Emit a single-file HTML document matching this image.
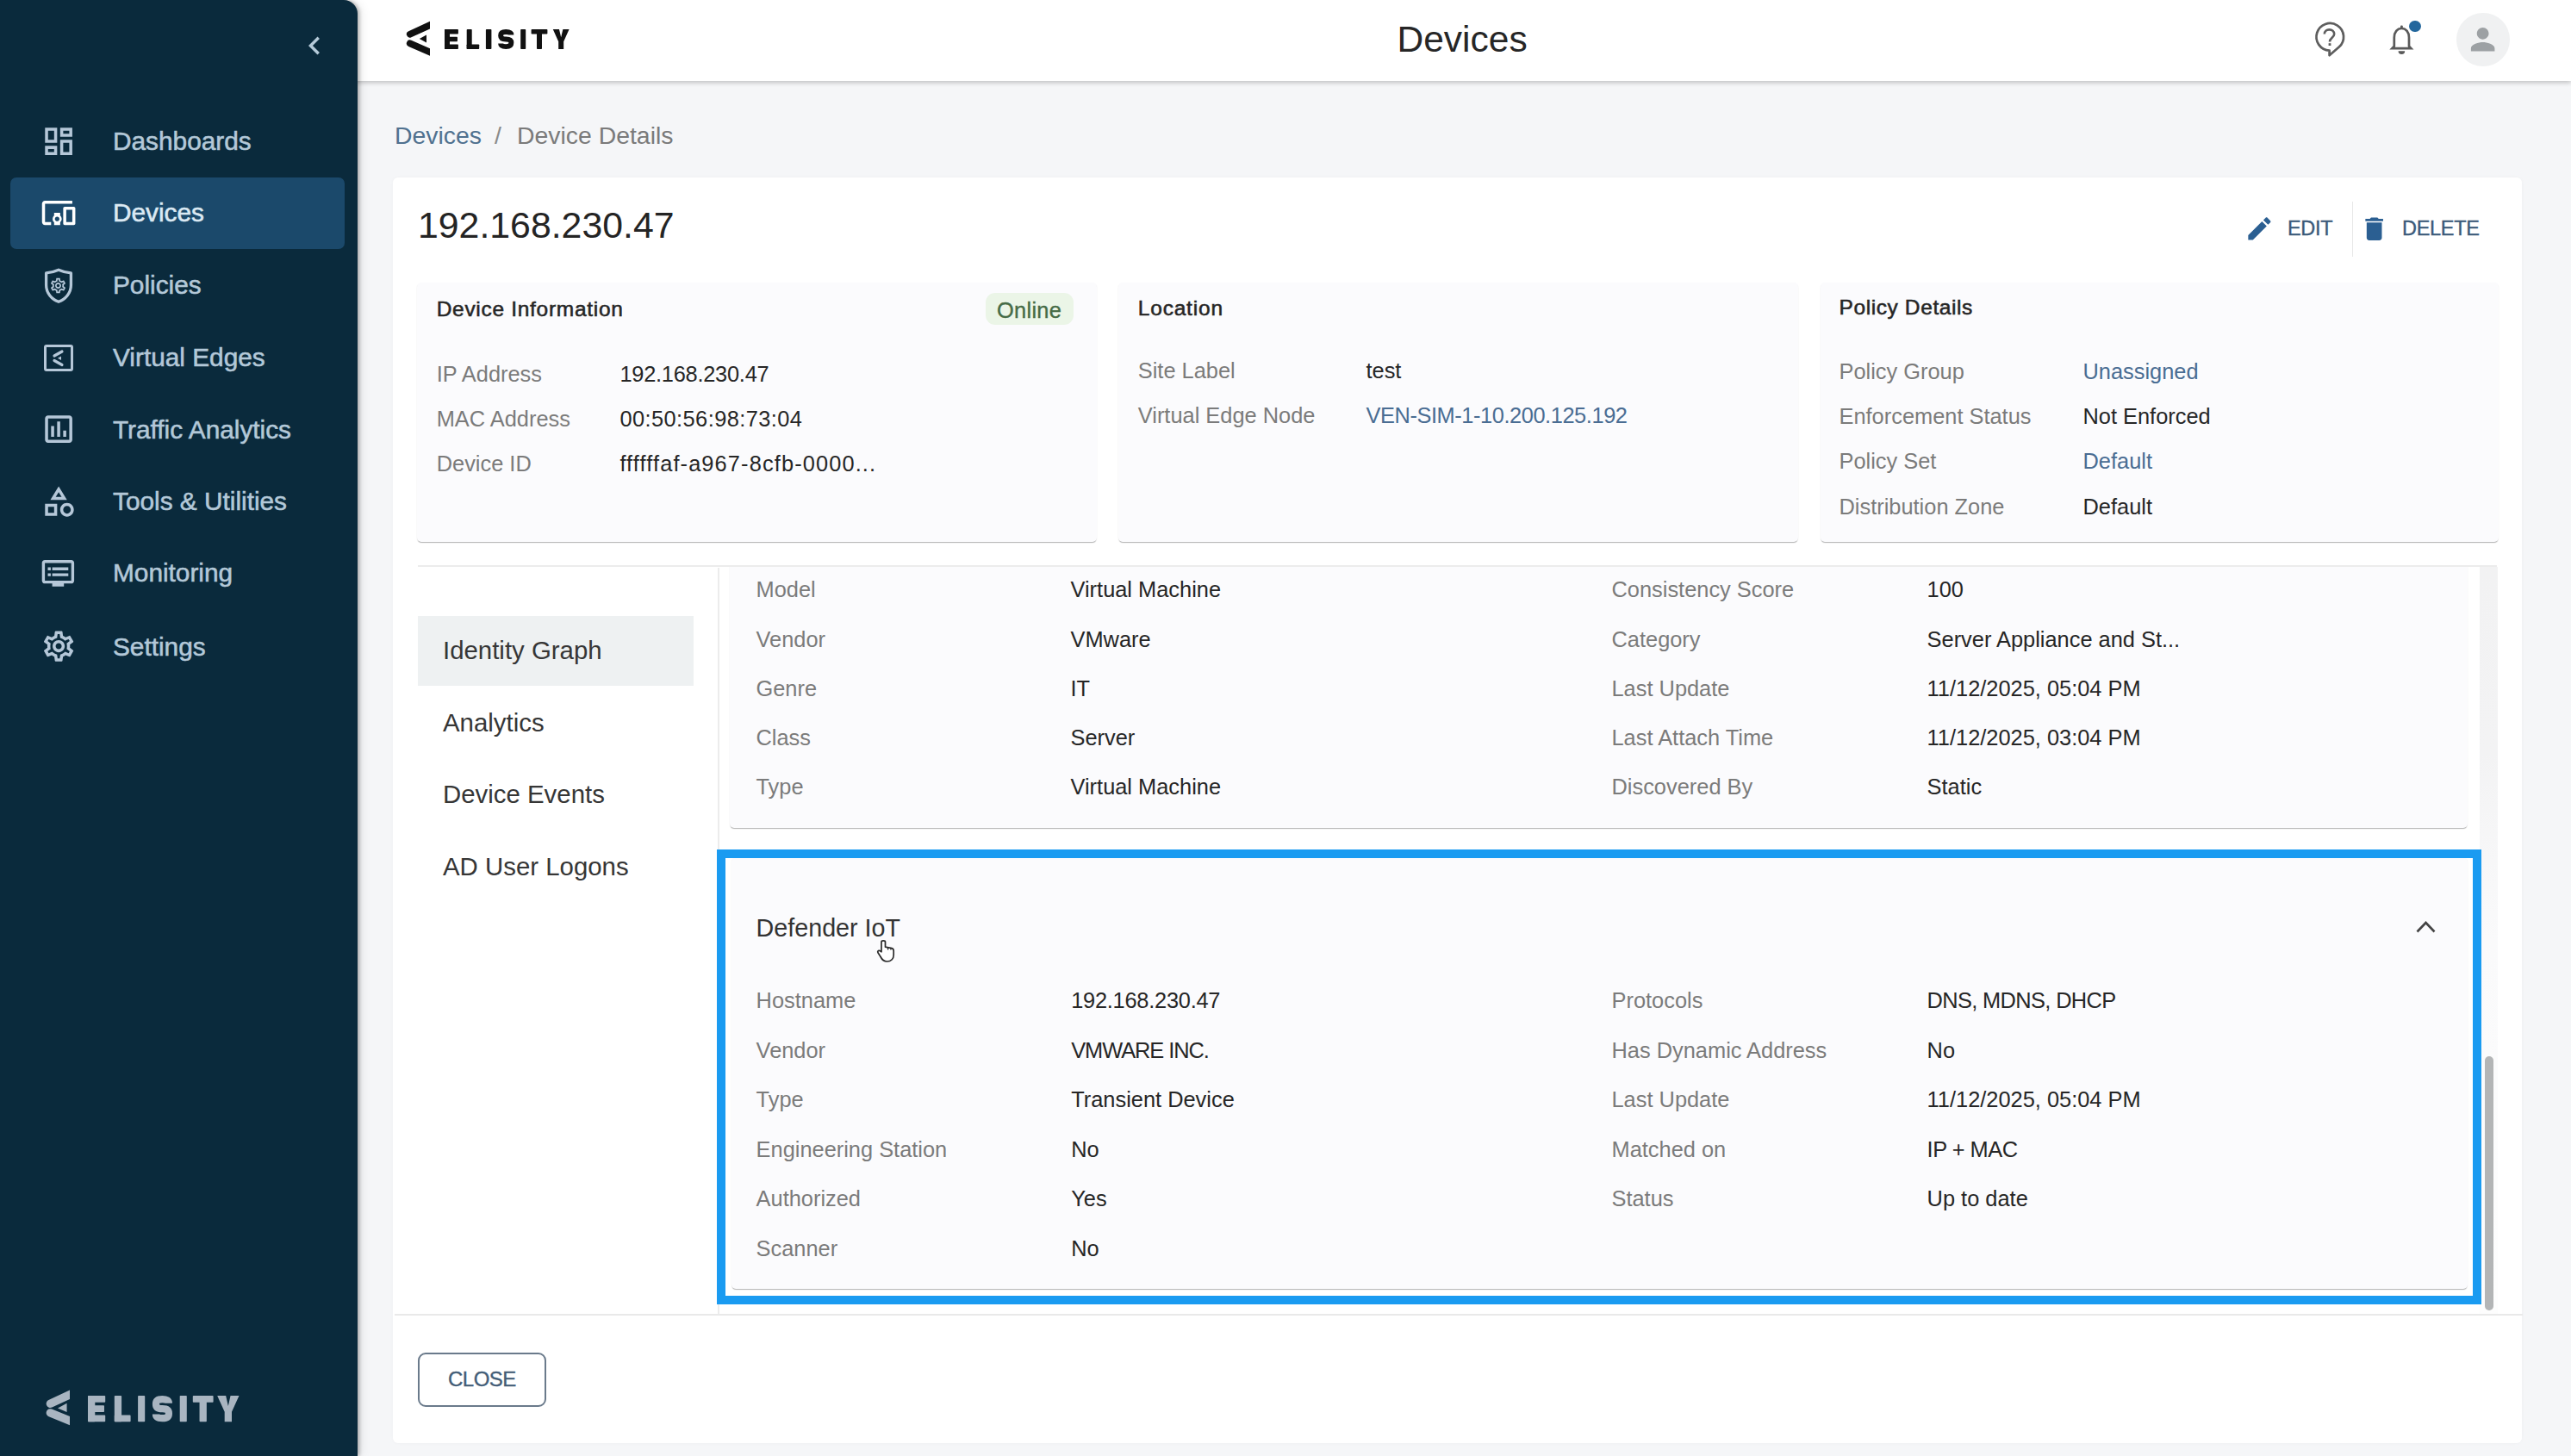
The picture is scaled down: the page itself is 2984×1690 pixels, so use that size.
<!DOCTYPE html>
<html><head><meta charset="utf-8"><title>Devices</title>
<style>
html,body{margin:0;padding:0;width:2984px;height:1690px;overflow:hidden;background:#f5f6f8;}
body{position:relative;font-family:"Liberation Sans",sans-serif;}
.a{position:absolute;}
.t{position:absolute;white-space:nowrap;line-height:1;}
.m{-webkit-text-stroke:0.35px currentColor;}
.mm{-webkit-text-stroke:0.55px currentColor;}
</style></head><body>
<div class="a" style="left:0.0px;top:0.0px;width:2984.0px;height:94.0px;background:#fff;box-shadow:0 2px 5px rgba(0,0,0,0.22);z-index:1"></div>
<div class="a" style="left:0;top:0;width:2984px;height:94px;z-index:2">
<svg class="a" style="left:467.70px;top:21.10px" width="31.70" height="47.70" viewBox="0 0 31.70 47.70"><g stroke="#111" stroke-width="7.8" stroke-linecap="round"><line x1="7.80" y1="18.70" x2="39.50" y2="4.24"/><line x1="7.80" y1="29.40" x2="39.50" y2="43.33"/></g><polygon fill="#111" points="18.80,23.90 27.00,19.60 27.00,28.60"/></svg>
<svg class="a" style="left:513.60px;top:31.80px" width="148.60" height="27.10" viewBox="0 0 148.60 27.10"><g fill="#111"><rect x="2.00" y="2.00" width="6.00" height="23.10" rx="0.8"/><rect x="2.00" y="2.00" width="15.90" height="5.58" rx="0.8"/><rect x="2.00" y="10.76" width="14.95" height="5.58" rx="0.8"/><rect x="2.00" y="19.52" width="15.90" height="5.58" rx="0.8"/><rect x="27.70" y="2.00" width="6.00" height="23.10" rx="0.8"/><rect x="27.70" y="19.52" width="14.50" height="5.58" rx="0.8"/><rect x="49.90" y="2.00" width="6.50" height="23.10" rx="0.8"/><rect x="90.20" y="2.00" width="6.00" height="23.10" rx="0.8"/><rect x="102.60" y="2.00" width="18.80" height="5.58" rx="0.8"/><rect x="109.00" y="2.00" width="6.00" height="23.10" rx="0.8"/><polygon points="127.80,2.00 135.00,2.00 137.20,11.24 139.40,2.00 146.60,2.00 140.20,16.32 140.20,25.10 134.20,25.10 134.20,16.32"/><path d="M79.40,8.59 Q79.40,5.00 73.25,5.00 Q67.10,5.00 67.10,9.27 Q67.10,13.55 73.25,13.55 Q79.40,13.55 79.40,17.83 Q79.40,22.10 73.25,22.10 Q67.10,22.10 67.10,18.51" fill="none" stroke="#111" stroke-width="5.88"/></g></svg>
<div class="t" style="left:1621.5px;top:24.5px;font-size:42.5px;color:#262626;">Devices</div>
<svg class="a" style="left:2680px;top:20px" width="48" height="50" viewBox="2680 20 48 50">
<path d="M2703.6 58.6 A15.8 15.8 0 1 1 2714.8 54.6 L2703.6 64.2 Z" fill="none" stroke="#5e5e5e" stroke-width="2.7" stroke-linejoin="round"/>
<path d="M2697.8 39.6 C2697.8 36.2 2700.4 34.4 2703.4 34.4 C2706.6 34.4 2709.2 36.4 2709.2 39.6 C2709.2 43.6 2704 44 2704 48.4" fill="none" stroke="#5e5e5e" stroke-width="2.6" stroke-linecap="butt"/>
<rect x="2702.6" y="50.2" width="2.8" height="2.8" fill="#5e5e5e"/>
</svg>
<svg class="a" style="left:2768px;top:22px" width="40" height="44" viewBox="2768 22 40 44">
<path d="M2776.4 56.2 L2778.8 53.6 V43.5 C2778.8 37.2 2782.4 33 2787.4 33 C2792.4 33 2796 37.2 2796 43.5 V53.6 L2798.4 56.2 Z" fill="none" stroke="#5a5a5a" stroke-width="2.7" stroke-linejoin="miter"/>
<rect x="2786" y="29.4" width="2.8" height="4.5" rx="1.2" fill="#5a5a5a"/>
<path d="M2783.6 59.2 H2791.2 A3.8 3.8 0 0 1 2783.6 59.2 Z" fill="#5a5a5a"/>
</svg>
<div class="a" style="left:2796.0px;top:23.7px;width:13.5px;height:13.5px;background:#23679d;border-radius:50%"></div>
<div class="a" style="left:2851.0px;top:15.0px;width:61.7px;height:61.7px;background:#f0f1f2;border-radius:50%"></div>
<svg class="a" style="left:2861.0px;top:24.7px;" width="41.3" height="41.3" viewBox="0 0 24 24"><path fill="#9da1a4" d="M12 12c2.21 0 4-1.79 4-4s-1.79-4-4-4-4 1.79-4 4 1.79 4 4 4zm0 2c-2.67 0-8 1.34-8 4v2h16v-2c0-2.66-5.33-4-8-4z"/></svg>
</div>
<div class="a" style="left:0.0px;top:0.0px;width:415.0px;height:1690.0px;background:#0a2a3c;border-top-right-radius:16px;box-shadow:2px 0 4px rgba(0,0,0,0.28), 5px 0 12px rgba(0,0,0,0.08);z-index:3"></div>
<div class="a" style="left:0;top:0;width:415px;height:1690px;z-index:4">
<svg class="a" style="left:344.0px;top:31.5px;" width="42.0" height="42.0" viewBox="0 0 24 24"><path fill="#b5cad9" d="M15.41 7.41L14 6l-6 6 6 6 1.41-1.41L10.83 12z"/></svg>
<div class="a" style="left:12.0px;top:205.6px;width:388.0px;height:83.2px;background:#1b496b;border-radius:7px"></div>
<div class="t mm" style="left:131.0px;top:148.9px;font-size:29.8px;color:#b3c8d8;">Dashboards</div>
<svg class="a" style="left:46.6px;top:142.9px;" width="42.2" height="42.2" viewBox="0 0 24 24"><path fill="#b5c7d8" d="M19 5v2h-4V5h4M9 5v6H5V5h4m10 8v6h-4v-6h4M9 17v2H5v-2h4M21 3h-8v6h8V3zM11 3H3v10h8V3zm10 8h-8v10h8V11zm-10 4H3v6h8v-6z"/></svg>
<div class="t mm" style="left:131.0px;top:232.3px;font-size:29.8px;color:#dbe9f3;">Devices</div>
<svg class="a" style="left:46.8px;top:226.4px;" width="42.2" height="42.2" viewBox="0 0 24 24"><path fill="#ffffff" d="M3 6h18V4H3c-1.1 0-2 .9-2 2v12c0 1.1.9 2 2 2h4v-2H3V6zm10 6H9v1.78c-.61.55-1 1.33-1 2.22s.39 1.67 1 2.22V20h4v-1.78c.61-.55 1-1.34 1-2.22s-.39-1.67-1-2.22V12zm-2 5.5c-.83 0-1.5-.67-1.5-1.5s.67-1.5 1.5-1.5 1.5.67 1.5 1.5-.67 1.5-1.5 1.5zM22 8h-6c-.5 0-1 .5-1 1v10c0 .5.5 1 1 1h6c.5 0 1-.5 1-1V9c0-.5-.5-1-1-1zm-1 10h-4v-8h4v8z"/></svg>
<div class="t mm" style="left:131.0px;top:315.9px;font-size:29.8px;color:#b3c8d8;">Policies</div>
<svg class="a" style="left:48px;top:309px" width="40" height="45" viewBox="0 0 40 45"><path d="M20 4.2 C15.5 6.2 10.5 7.6 5.6 7.9 V22 C5.6 31 12 38.5 20 41.3 C28 38.5 34.4 31 34.4 22 V7.9 C29.5 7.6 24.5 6.2 20 4.2 Z" fill="none" stroke="#b5c7d8" stroke-width="3.3" stroke-linejoin="round"/></svg>
<svg class="a" style="left:57.2px;top:320.5px;" width="21.0" height="21.0" viewBox="0 0 24 24"><path fill="#b5c7d8" d="M19.43 12.98c.04-.32.07-.64.07-.98 0-.34-.03-.66-.07-.98l2.11-1.65c.19-.15.24-.42.12-.64l-2-3.46c-.09-.16-.26-.25-.44-.25-.06 0-.12.01-.17.03l-2.49 1c-.52-.4-1.08-.73-1.69-.98l-.38-2.65C14.46 2.18 14.25 2 14 2h-4c-.25 0-.46.18-.49.42l-.38 2.65c-.61.25-1.170.59-1.69.98l-2.49-1c-.06-.02-.12-.03-.18-.03-.17 0-.34.09-.43.25l-2 3.46c-.13.22-.07.49.12.64l2.11 1.65c-.04.32-.07.65-.07.98 0 .33.03.66.07.98l-2.11 1.65c-.19.15-.24.42-.12.64l2 3.46c.09.16.26.25.44.25.06 0 .12-.01.17-.03l2.49-1c.52.4 1.08.73 1.69.98l.38 2.65c.03.24.24.42.49.42h4c.25 0 .46-.18.49-.42l.38-2.65c.61-.25 1.17-.59 1.69-.98l2.49 1c.06.02.12.03.18.03.17 0 .34-.09.43-.25l2-3.46c.12-.22.07-.49-.12-.64l-2.11-1.65zm-1.98-1.71c.04.31.05.52.05.73 0 .21-.02.43-.05.73l-.14 1.13.89.7 1.08.84-.7 1.21-1.27-.51-1.04-.42-.9.68c-.43.32-.84.56-1.250.73l-1.06.43-.16 1.13-.2 1.35h-1.4l-.19-1.35-.16-1.13-1.06-.43c-.43-.18-.83-.41-1.23-.71l-.91-.7-1.06.43-1.27.51-.7-1.21 1.08-.84.89-.7-.14-1.13c-.03-.31-.05-.54-.05-.74s.02-.43.05-.73l.14-1.13-.89-.7-1.08-.84.7-1.21 1.27.51 1.04.42.9-.68c.43-.32.84-.56 1.25-.73l1.06-.43.16-1.13.2-1.35h1.39l.19 1.35.16 1.13 1.06.43c.43.18.83.41 1.23.71l.91.7 1.06-.43 1.27-.51.7 1.21-1.07.85-.89.7.14 1.13zM12 8c-2.21 0-4 1.790-4 4s1.79 4 4 4 4-1.79 4-4-1.79-4-4-4zm0 6c-1.1 0-2-.9-2-2s.9-2 2-2 2 .9 2 2-.9 2-2 2z"/></svg>
<div class="t mm" style="left:131.0px;top:400.1px;font-size:29.8px;color:#b3c8d8;">Virtual Edges</div>
<div class="a" style="left:51.0px;top:399.5px;width:33.5px;height:31.3px;border:3.6px solid #b5c7d8;border-radius:3px;box-sizing:border-box"></div>
<svg class="a" style="left:58px;top:404px" width="20" height="24" viewBox="0 0 20 24">
<line x1="5" y1="9" x2="14" y2="4" stroke="#b5c7d8" stroke-width="3.2" stroke-linecap="round"/>
<line x1="5" y1="14.5" x2="14" y2="19.5" stroke="#b5c7d8" stroke-width="3.2" stroke-linecap="round"/>
<polygon points="9,11.8 13,9.6 13,14" fill="#b5c7d8"/>
</svg>
<div class="t mm" style="left:131.0px;top:483.5px;font-size:29.8px;color:#b3c8d8;">Traffic Analytics</div>
<svg class="a" style="left:46.5px;top:477.4px;" width="42.2" height="42.2" viewBox="0 0 24 24"><path fill="#b5c7d8" d="M9 17H7v-7h2v7zm4 0h-2V7h2v10zm4 0h-2v-4h2v4zm2 2H5V5h14v14zm0-16H5c-1.1 0-2 .9-2 2v14c0 1.1.9 2 2 2h14c1.1 0 2-.9 2-2V5c0-1.1-.9-2-2-2z"/></svg>
<div class="t mm" style="left:131.0px;top:566.9px;font-size:29.8px;color:#b3c8d8;">Tools &amp; Utilities</div>
<svg class="a" style="left:46.6px;top:561.0px;" width="42.2" height="42.2" viewBox="0 0 24 24"><path fill="#b5c7d8" d="M12 2l-5.5 9h11L12 2zm0 3.84L13.93 9h-3.87L12 5.84zM17.5 13c-2.49 0-4.5 2.01-4.5 4.5s2.01 4.5 4.5 4.5 4.5-2.01 4.5-4.5-2.01-4.5-4.5-4.5zm0 7c-1.38 0-2.5-1.12-2.5-2.5s1.12-2.5 2.5-2.5 2.5 1.12 2.5 2.5-1.12 2.5-2.5 2.5zM3 21.5h8v-8H3v8zm2-6h4v4H5v-4z"/></svg>
<div class="t mm" style="left:131.0px;top:650.3px;font-size:29.8px;color:#b3c8d8;">Monitoring</div>
<svg class="a" style="left:47.0px;top:644.8px;" width="40.8" height="40.8" viewBox="0 0 24 24"><path fill="#b5c7d8" d="M21 3H3c-1.1 0-2 .9-2 2v12c0 1.1.9 2 2 2h5v2h8v-2h5c1.1 0 1.99-.9 1.99-2L23 5c0-1.1-.9-2-2-2zm0 14H3V5h18v12zm-2-9H8v2h11V8zm0 4H8v2h11v-2zM7 8H5v2h2V8zm0 4H5v2h2v-2z"/></svg>
<div class="t mm" style="left:131.0px;top:735.7px;font-size:29.8px;color:#b3c8d8;">Settings</div>
<svg class="a" style="left:46.6px;top:728.8px;" width="42.2" height="42.2" viewBox="0 0 24 24"><path fill="#b5c7d8" d="M19.43 12.98c.04-.32.07-.64.07-.98 0-.34-.03-.66-.07-.98l2.11-1.65c.19-.15.24-.42.12-.64l-2-3.46c-.09-.16-.26-.25-.44-.25-.06 0-.12.01-.17.03l-2.49 1c-.52-.4-1.08-.73-1.69-.98l-.38-2.65C14.46 2.18 14.25 2 14 2h-4c-.25 0-.46.18-.49.42l-.38 2.65c-.61.25-1.170.59-1.69.98l-2.49-1c-.06-.02-.12-.03-.18-.03-.17 0-.34.09-.43.25l-2 3.46c-.13.22-.07.49.12.64l2.11 1.65c-.04.32-.07.65-.07.98 0 .33.03.66.07.98l-2.11 1.65c-.19.15-.24.42-.12.64l2 3.46c.09.16.26.25.44.25.06 0 .12-.01.17-.03l2.49-1c.52.4 1.08.73 1.69.98l.38 2.65c.03.24.24.42.49.42h4c.25 0 .46-.18.49-.42l.38-2.65c.61-.25 1.17-.59 1.69-.98l2.49 1c.06.02.12.03.18.03.17 0 .34-.09.43-.25l2-3.46c.12-.22.07-.49-.12-.64l-2.11-1.65zm-1.98-1.71c.04.31.05.52.05.73 0 .21-.02.43-.05.73l-.14 1.13.89.7 1.08.84-.7 1.21-1.27-.51-1.04-.42-.9.68c-.43.32-.84.56-1.250.73l-1.06.43-.16 1.13-.2 1.35h-1.4l-.19-1.35-.16-1.13-1.06-.43c-.43-.18-.83-.41-1.23-.71l-.91-.7-1.06.43-1.27.51-.7-1.21 1.08-.84.89-.7-.14-1.13c-.03-.31-.05-.54-.05-.74s.02-.43.05-.73l.14-1.13-.89-.7-1.08-.84.7-1.21 1.27.51 1.04.42.9-.68c.43-.32.84-.56 1.25-.73l1.06-.43.16-1.13.2-1.35h1.39l.19 1.35.16 1.13 1.06.43c.43.18.83.41 1.23.71l.91.7 1.06-.43 1.27-.51.7 1.21-1.07.85-.89.7.14 1.13zM12 8c-2.21 0-4 1.790-4 4s1.79 4 4 4 4-1.79 4-4-1.79-4-4-4zm0 6c-1.1 0-2-.9-2-2s.9-2 2-2 2 .9 2 2-.9 2-2 2z"/></svg>
<svg class="a" style="left:48.80px;top:1608.60px" width="32.70" height="49.80" viewBox="0 0 32.70 49.80"><g stroke="#a9b5c1" stroke-width="9.4" stroke-linecap="round"><line x1="9.40" y1="20.30" x2="42.10" y2="5.00"/><line x1="9.40" y1="30.90" x2="42.10" y2="44.23"/></g><polygon fill="#a9b5c1" points="18.00,25.40 28.60,19.80 28.60,29.90"/></svg>
<svg class="a" style="left:100.20px;top:1618.30px" width="179.50" height="34.30" viewBox="0 0 179.50 34.30"><g fill="#a9b5c1"><rect x="2.00" y="2.00" width="8.30" height="30.30" rx="0.8"/><rect x="2.00" y="2.00" width="20.20" height="7.72" rx="0.8"/><rect x="2.00" y="13.29" width="18.99" height="7.72" rx="0.8"/><rect x="2.00" y="24.58" width="20.20" height="7.72" rx="0.8"/><rect x="32.80" y="2.00" width="8.30" height="30.30" rx="0.8"/><rect x="32.80" y="24.58" width="18.80" height="7.72" rx="0.8"/><rect x="60.10" y="2.00" width="8.10" height="30.30" rx="0.8"/><rect x="108.70" y="2.00" width="8.10" height="30.30" rx="0.8"/><rect x="123.80" y="2.00" width="23.80" height="7.72" rx="0.8"/><rect x="131.55" y="2.00" width="8.30" height="30.30" rx="0.8"/><polygon points="152.20,2.00 162.16,2.00 164.85,14.12 167.54,2.00 177.50,2.00 169.00,20.79 169.00,32.30 160.70,32.30 160.70,20.79"/><path d="M95.95,10.77 Q95.95,6.15 88.45,6.15 Q80.95,6.15 80.95,11.65 Q80.95,17.15 88.45,17.15 Q95.95,17.15 95.95,22.65 Q95.95,28.15 88.45,28.15 Q80.95,28.15 80.95,23.53" fill="none" stroke="#a9b5c1" stroke-width="8.13"/></g></svg>
</div>
<div class="t" style="left:458.0px;top:142.5px;font-size:28.4px;color:#50718f;">Devices</div>
<div class="t" style="left:574.0px;top:142.5px;font-size:28.4px;color:#8a8a8a;">/</div>
<div class="t" style="left:600.0px;top:142.5px;font-size:28.4px;color:#7a7a7a;">Device Details</div>
<div class="a" style="left:455.8px;top:206.0px;width:2471.7px;height:1469.3px;background:#fff;border-radius:6px;box-shadow:0 0 4px rgba(0,0,0,0.03)"></div>
<div class="t" style="left:485.0px;top:239.7px;font-size:42.8px;color:#242424;">192.168.230.47</div>
<svg class="a" style="left:2604.6px;top:248.4px;" width="34.8" height="34.8" viewBox="0 0 24 24"><path fill="#2b5f92" d="M3 17.25V21h3.75L17.81 9.94l-3.75-3.75L3 17.25zM20.71 7.04c.39-.39.39-1.02 0-1.41l-2.34-2.34c-.39-.39-1.02-.39-1.41 0l-1.83 1.83 3.75 3.75 1.83-1.83z"/></svg>
<div class="t m" style="left:2655.0px;top:253.9px;font-size:23.5px;color:#3b5a7a;letter-spacing:-0.3px;">EDIT</div>
<div class="a" style="left:2729.5px;top:234.0px;width:1.5px;height:63.5px;background:#e8e8e8"></div>
<svg class="a" style="left:2737.5px;top:248.3px;" width="35.3" height="35.3" viewBox="0 0 24 24"><path fill="#2b5f92" d="M6 19c0 1.1.9 2 2 2h8c1.1 0 2-.9 2-2V7H6v12zM19 4h-3.5l-1-1h-5l-1 1H5v2h14V4z"/></svg>
<div class="t m" style="left:2788.0px;top:253.9px;font-size:23.5px;color:#3b5a7a;letter-spacing:-0.3px;">DELETE</div>
<div class="a" style="left:484.4px;top:328.0px;width:788.6px;height:301.3px;background:#fbfbfd;border-radius:5px;box-shadow:0 2px 1px -1px rgba(0,0,0,0.2), 0 1px 1px 0 rgba(0,0,0,0.08), 0 1px 2px 0 rgba(0,0,0,0.05)"></div>
<div class="a" style="left:1297.7px;top:328.0px;width:789.3px;height:301.3px;background:#fbfbfd;border-radius:5px;box-shadow:0 2px 1px -1px rgba(0,0,0,0.2), 0 1px 1px 0 rgba(0,0,0,0.08), 0 1px 2px 0 rgba(0,0,0,0.05)"></div>
<div class="a" style="left:2112.7px;top:328.0px;width:786.9px;height:301.3px;background:#fbfbfd;border-radius:5px;box-shadow:0 2px 1px -1px rgba(0,0,0,0.2), 0 1px 1px 0 rgba(0,0,0,0.08), 0 1px 2px 0 rgba(0,0,0,0.05)"></div>
<div class="t mm" style="left:506.7px;top:347.1px;font-size:24.5px;color:#262626;letter-spacing:0.7px;">Device Information</div>
<div class="a" style="left:1143.6px;top:340.0px;width:102.7px;height:37.3px;background:#ebf5e7;border-radius:11px"></div>
<div class="t m" style="left:1157.0px;top:347.5px;font-size:25.4px;color:#466b46;letter-spacing:0.3px;">Online</div>
<div class="t" style="left:506.7px;top:422.4px;font-size:25.4px;color:#7b7b7b;">IP Address</div>
<div class="t" style="left:719.4px;top:422.4px;font-size:25.4px;color:#262626;letter-spacing:-0.25px;">192.168.230.47</div>
<div class="t" style="left:506.7px;top:474.4px;font-size:25.4px;color:#7b7b7b;">MAC Address</div>
<div class="t" style="left:719.4px;top:474.4px;font-size:25.4px;color:#262626;letter-spacing:0.43px;">00:50:56:98:73:04</div>
<div class="t" style="left:506.7px;top:526.4px;font-size:25.4px;color:#7b7b7b;">Device ID</div>
<div class="t" style="left:719.4px;top:526.4px;font-size:25.4px;color:#262626;letter-spacing:1.12px;">ffffffaf-a967-8cfb-0000...</div>
<div class="t mm" style="left:1320.8px;top:345.7px;font-size:24.5px;color:#262626;letter-spacing:0.8px;">Location</div>
<div class="t" style="left:1320.8px;top:418.3px;font-size:25.4px;color:#7b7b7b;">Site Label</div>
<div class="t" style="left:1585.5px;top:418.3px;font-size:25.4px;color:#262626;">test</div>
<div class="t" style="left:1320.8px;top:470.3px;font-size:25.4px;color:#7b7b7b;">Virtual Edge Node</div>
<div class="t" style="left:1585.5px;top:470.3px;font-size:25.4px;color:#4a6d93;letter-spacing:-0.43px;">VEN-SIM-1-10.200.125.192</div>
<div class="t mm" style="left:2134.5px;top:344.7px;font-size:24.5px;color:#262626;letter-spacing:0.6px;">Policy Details</div>
<div class="t" style="left:2134.5px;top:419.0px;font-size:25.4px;color:#7b7b7b;">Policy Group</div>
<div class="t" style="left:2417.5px;top:419.0px;font-size:25.4px;color:#4a6d93;">Unassigned</div>
<div class="t" style="left:2134.5px;top:471.2px;font-size:25.4px;color:#7b7b7b;">Enforcement Status</div>
<div class="t" style="left:2417.5px;top:471.2px;font-size:25.4px;color:#262626;">Not Enforced</div>
<div class="t" style="left:2134.5px;top:523.4px;font-size:25.4px;color:#7b7b7b;">Policy Set</div>
<div class="t" style="left:2417.5px;top:523.4px;font-size:25.4px;color:#4a6d93;">Default</div>
<div class="t" style="left:2134.5px;top:575.6px;font-size:25.4px;color:#7b7b7b;">Distribution Zone</div>
<div class="t" style="left:2417.5px;top:575.6px;font-size:25.4px;color:#262626;">Default</div>
<div class="a" style="left:484.5px;top:656.0px;width:2413.5px;height:1.5px;background:#ececec"></div>
<div class="a" style="left:484.5px;top:714.7px;width:320.2px;height:81.7px;background:#eef1f2"></div>
<div class="t" style="left:514.0px;top:740.4px;font-size:29.4px;color:#363636;">Identity Graph</div>
<div class="t" style="left:514.0px;top:823.8px;font-size:29.4px;color:#363636;">Analytics</div>
<div class="t" style="left:514.0px;top:907.2px;font-size:29.4px;color:#363636;">Device Events</div>
<div class="t" style="left:514.0px;top:990.6px;font-size:29.4px;color:#363636;">AD User Logons</div>
<div class="a" style="left:833.0px;top:659.0px;width:1.5px;height:867.0px;background:#ececec"></div>
<div class="a" style="left:834.5px;top:657.5px;width:2064px;height:868px;overflow:hidden">
<div class="a" style="left:12.5px;top:-97.5px;width:2017.0px;height:401.0px;background:#fbfbfd;border-radius:5px;box-shadow:0 2px 1px -1px rgba(0,0,0,0.2), 0 1px 1px 0 rgba(0,0,0,0.08), 0 1px 2px 0 rgba(0,0,0,0.05)"></div>
<div class="t" style="left:43.0px;top:14.8px;font-size:25.4px;color:#7b7b7b;">Model</div>
<div class="t" style="left:408.0px;top:14.8px;font-size:25.4px;color:#262626;">Virtual Machine</div>
<div class="t" style="left:1036.0px;top:14.8px;font-size:25.4px;color:#7b7b7b;">Consistency Score</div>
<div class="t" style="left:1402.1px;top:14.8px;font-size:25.4px;color:#262626;">100</div>
<div class="t" style="left:43.0px;top:72.0px;font-size:25.4px;color:#7b7b7b;">Vendor</div>
<div class="t" style="left:408.0px;top:72.0px;font-size:25.4px;color:#262626;">VMware</div>
<div class="t" style="left:1036.0px;top:72.0px;font-size:25.4px;color:#7b7b7b;">Category</div>
<div class="t" style="left:1402.1px;top:72.0px;font-size:25.4px;color:#262626;">Server Appliance and St...</div>
<div class="t" style="left:43.0px;top:129.2px;font-size:25.4px;color:#7b7b7b;">Genre</div>
<div class="t" style="left:408.0px;top:129.2px;font-size:25.4px;color:#262626;">IT</div>
<div class="t" style="left:1036.0px;top:129.2px;font-size:25.4px;color:#7b7b7b;">Last Update</div>
<div class="t" style="left:1402.1px;top:129.2px;font-size:25.4px;color:#262626;">11/12/2025, 05:04 PM</div>
<div class="t" style="left:43.0px;top:186.4px;font-size:25.4px;color:#7b7b7b;">Class</div>
<div class="t" style="left:408.0px;top:186.4px;font-size:25.4px;color:#262626;">Server</div>
<div class="t" style="left:1036.0px;top:186.4px;font-size:25.4px;color:#7b7b7b;">Last Attach Time</div>
<div class="t" style="left:1402.1px;top:186.4px;font-size:25.4px;color:#262626;">11/12/2025, 03:04 PM</div>
<div class="t" style="left:43.0px;top:243.6px;font-size:25.4px;color:#7b7b7b;">Type</div>
<div class="t" style="left:408.0px;top:243.6px;font-size:25.4px;color:#262626;">Virtual Machine</div>
<div class="t" style="left:1036.0px;top:243.6px;font-size:25.4px;color:#7b7b7b;">Discovered By</div>
<div class="t" style="left:1402.1px;top:243.6px;font-size:25.4px;color:#262626;">Static</div>
<div class="a" style="left:14.5px;top:337.5px;width:2015.0px;height:501.4px;background:#fbfbfd;border-radius:5px;box-shadow:0 2px 1px -1px rgba(0,0,0,0.2), 0 1px 1px 0 rgba(0,0,0,0.08), 0 1px 2px 0 rgba(0,0,0,0.05)"></div>
<div class="t" style="left:43.1px;top:405.5px;font-size:28.7px;color:#333;">Defender IoT</div>
<svg class="a" style="left:1965.5px;top:404.5px" width="32" height="26" viewBox="0 0 32 26"><polyline points="5.5,19.5 15.5,9 25.5,19.5" fill="none" stroke="#444" stroke-width="2.6"/></svg>
<div class="t" style="left:43.1px;top:491.8px;font-size:25.4px;color:#7b7b7b;">Hostname</div>
<div class="t" style="left:408.7px;top:491.8px;font-size:25.4px;color:#262626;letter-spacing:-0.25px;">192.168.230.47</div>
<div class="t" style="left:1036.0px;top:491.8px;font-size:25.4px;color:#7b7b7b;">Protocols</div>
<div class="t" style="left:1402.1px;top:491.8px;font-size:25.4px;color:#262626;letter-spacing:-0.64px;">DNS, MDNS, DHCP</div>
<div class="t" style="left:43.1px;top:549.3px;font-size:25.4px;color:#7b7b7b;">Vendor</div>
<div class="t" style="left:408.7px;top:549.3px;font-size:25.4px;color:#262626;letter-spacing:-1.05px;">VMWARE INC.</div>
<div class="t" style="left:1036.0px;top:549.3px;font-size:25.4px;color:#7b7b7b;">Has Dynamic Address</div>
<div class="t" style="left:1402.1px;top:549.3px;font-size:25.4px;color:#262626;">No</div>
<div class="t" style="left:43.1px;top:606.8px;font-size:25.4px;color:#7b7b7b;">Type</div>
<div class="t" style="left:408.7px;top:606.8px;font-size:25.4px;color:#262626;">Transient Device</div>
<div class="t" style="left:1036.0px;top:606.8px;font-size:25.4px;color:#7b7b7b;">Last Update</div>
<div class="t" style="left:1402.1px;top:606.8px;font-size:25.4px;color:#262626;">11/12/2025, 05:04 PM</div>
<div class="t" style="left:43.1px;top:664.3px;font-size:25.4px;color:#7b7b7b;">Engineering Station</div>
<div class="t" style="left:408.7px;top:664.3px;font-size:25.4px;color:#262626;">No</div>
<div class="t" style="left:1036.0px;top:664.3px;font-size:25.4px;color:#7b7b7b;">Matched on</div>
<div class="t" style="left:1402.1px;top:664.3px;font-size:25.4px;color:#262626;letter-spacing:-0.5px;">IP + MAC</div>
<div class="t" style="left:43.1px;top:721.8px;font-size:25.4px;color:#7b7b7b;">Authorized</div>
<div class="t" style="left:408.7px;top:721.8px;font-size:25.4px;color:#262626;">Yes</div>
<div class="t" style="left:1036.0px;top:721.8px;font-size:25.4px;color:#7b7b7b;">Status</div>
<div class="t" style="left:1402.1px;top:721.8px;font-size:25.4px;color:#262626;">Up to date</div>
<div class="t" style="left:43.1px;top:779.3px;font-size:25.4px;color:#7b7b7b;">Scanner</div>
<div class="t" style="left:408.7px;top:779.3px;font-size:25.4px;color:#262626;">No</div>
<div class="a" style="left:2043.5px;top:0.0px;width:21.5px;height:868.5px;background:linear-gradient(#f2f2f3 0%, #f3f3f4 25%, #fafafb 50%, #fdfdfd 100%)"></div>
<div class="a" style="left:2049.0px;top:568.0px;width:10.5px;height:295.5px;background:#b3b5b6;border-radius:5px"></div>
</div>
<div class="a" style="left:832.0px;top:986.0px;width:2048.0px;height:527.6px;border:10.2px solid #1a9bf1;box-sizing:border-box"></div>
<svg class="a" style="left:1016px;top:1090.3px" width="26" height="30" viewBox="0 0 26 30">
<path d="M7 13.5 V3.4 C7 1.4 11.5 1.4 11.5 3.4 V9.2 L15 9.8 L18 10.4 C20 10.8 21.2 11.6 21.2 13.5 V18.5 C21.2 23 18 26 13.5 26 C9.5 26 7.5 23.5 6 20.5 L3 15.8 C2.2 14.5 3.2 13 4.8 13.4 L7 14.8 Z" fill="#fff" stroke="#2a2a2a" stroke-width="1.7" stroke-linejoin="round"/>
<path d="M14.6 10 V12.6 M17.9 10.6 V12.6" stroke="#2a2a2a" stroke-width="1.3"/>
</svg>
<div class="a" style="left:458.0px;top:1525.0px;width:2470.0px;height:1.5px;background:#e9e9e9"></div>
<div class="a" style="left:485.4px;top:1569.5px;width:148.2px;height:63.0px;border:2.2px solid #6a7a8b;border-radius:9px;box-sizing:border-box"></div>
<div class="t m" style="left:520.0px;top:1588.6px;font-size:24px;color:#435d77;letter-spacing:-0.5px;">CLOSE</div>
</body></html>
